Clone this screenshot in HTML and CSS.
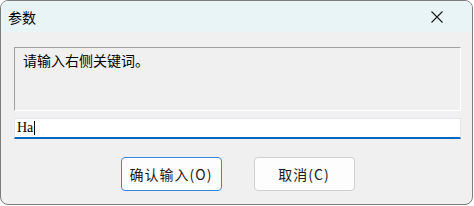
FILE: index.html
```html
<!DOCTYPE html>
<html>
<head>
    <title>参数</title>
    <link rel="stylesheet" href="styles.css">
</head>
<body>
    <div class="window">
        <div class="titlebar">
            <span class="title">参数</span>
            <span class="close">
                <svg width="12" height="12" viewBox="0 0 12 12">
                    <path d="M0.5 0.5 L11.5 11.5 M11.5 0.5 L0.5 11.5" stroke="#1a1a1a" stroke-width="1.1" fill="none"/>
                </svg>
            </span>
        </div>

        <div class="content">
            <div class="prompt">请输入右侧关键词。</div>

            <div class="input">
                <span class="input-text">Ha</span><span class="caret"></span>
            </div>

            <div class="buttons">
                <button class="btn default">确认输入(O)</button>
                <button class="btn">取消(C)</button>
            </div>
        </div>
    </div>
</body>
</html>
```

FILE: styles.css
```css
body {
    margin: 0;
    background-color: #ffffff;
    font-family: "Noto Sans CJK SC", "Noto Sans", sans-serif;
}

.window {
    width: 473px;
    height: 205px;
    box-sizing: border-box;
    border: 1px solid #7d7d7d;
    border-radius: 8px;
    background-color: #f0f0f0;
    overflow: hidden;
    display: flex;
    flex-direction: column;
}

.titlebar {
    height: 31px;
    background-color: #e9f4f7;
    display: flex;
    align-items: center;
    justify-content: space-between;
    padding: 0 29px 0 7px;
}

.title {
    font-size: 14px;
    color: #000;
}

.close {
    display: flex;
}

.content {
    padding: 15px 11px 0 13px;
    display: flex;
    flex-direction: column;
}

.prompt {
    height: 64px;
    border-top: 1px solid #a0a0a0;
    border-left: 1px solid #a0a0a0;
    border-right: 1px solid #ffffff;
    border-bottom: 1px solid #ffffff;
    padding: 2px 8px;
    box-sizing: border-box;
    font-size: 14px;
    line-height: 20px;
    color: #000;
}

.input {
    margin-top: 7px;
    height: 21px;
    box-sizing: border-box;
    background-color: #fff;
    border: 1px solid #e3e6ea;
    border-bottom: 2px solid #0067c0;
    display: flex;
    align-items: center;
    padding-left: 2px;
}

.input-text {
    font-family: "Liberation Serif", "DejaVu Serif", serif;
    font-size: 14px;
    color: #000;
}

.caret {
    width: 1px;
    height: 14px;
    background-color: #000;
    margin-left: 1px;
}

.buttons {
    margin-top: 18px;
    display: flex;
    justify-content: center;
    gap: 32px;
}

.btn {
    width: 101px;
    height: 34px;
    box-sizing: border-box;
    background-color: #fdfdfd;
    border: 1px solid #d0d0d0;
    border-radius: 4px;
    font-family: "Noto Sans CJK SC", "Noto Sans", sans-serif;
    font-size: 14px;
    letter-spacing: 1px;
    color: #1a1a1a;
    padding: 0;
}

.btn.default {
    border: 1px solid #3b87d6;
}
```
